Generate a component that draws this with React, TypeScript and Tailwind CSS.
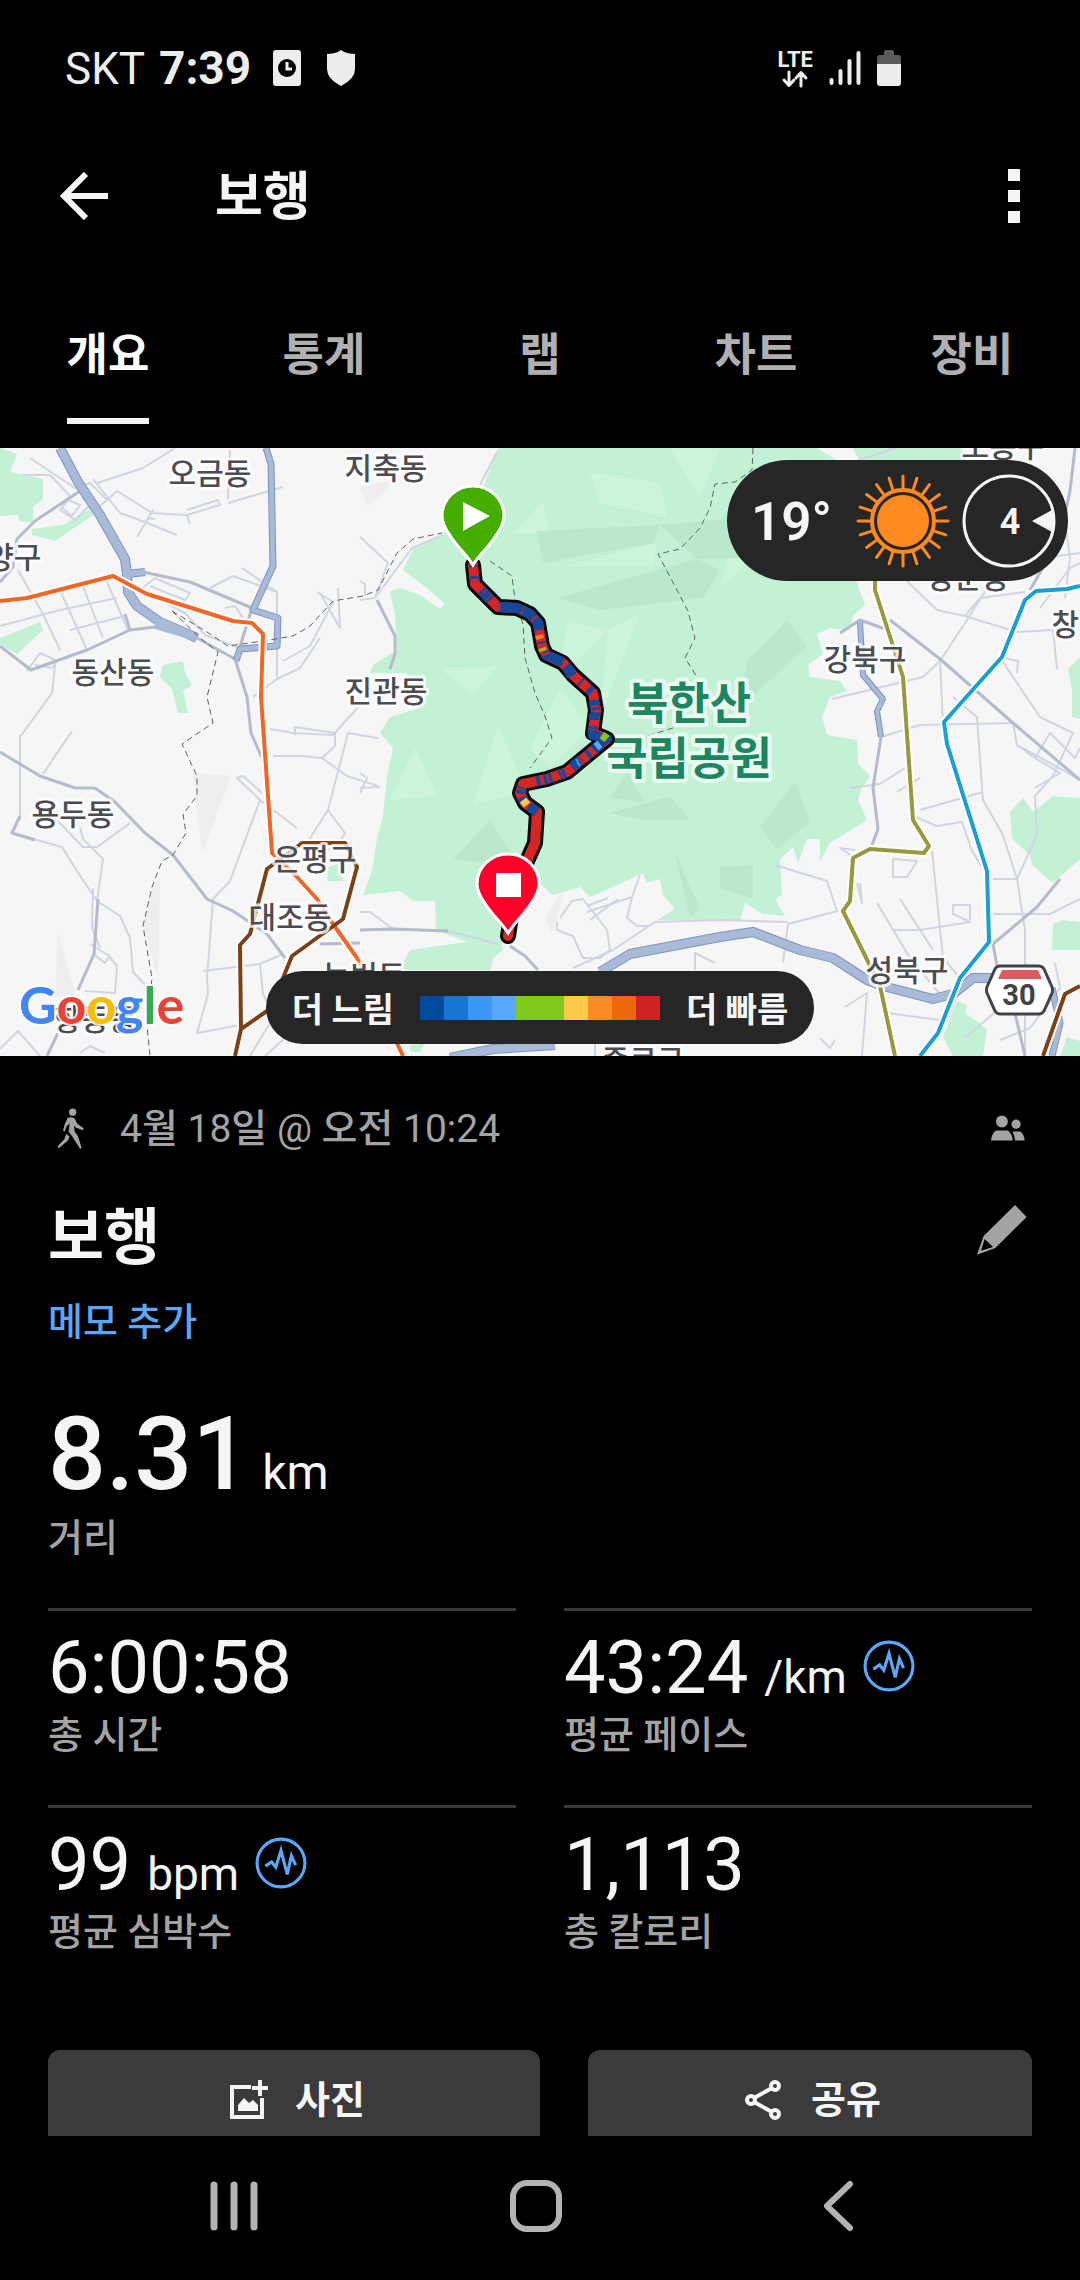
import type { ReactNode } from "react"

interface Stat {
  value: string
  unit?: string
  label: string
  hasInsight?: boolean
}

interface MapLabel {
  text: string
  x: number
  y: number
}

const tabs = ["개요", "통계", "랩", "차트", "장비"]

const stats: Stat[] = [
  { value: "6:00:58", label: "총 시간" },
  { value: "43:24", unit: "/km", label: "평균 페이스", hasInsight: true },
  { value: "99", unit: "bpm", label: "평균 심박수", hasInsight: true },
  { value: "1,113", label: "총 칼로리" },
]

// Slow to fast
const paceColors = [
  "#004b9f",
  "#1976d2",
  "#3d97f4",
  "#57a9ff",
  "#80c91f",
  "#80c91f",
  "#fccb4b",
  "#fd8b25",
  "#ec680d",
  "#cf2323",
]

const mapLabels: MapLabel[] = [
  { text: "오금동", x: 210, y: 36 },
  { text: "지축동", x: 386, y: 31 },
  { text: "덕양구", x: 0, y: 120 },
  { text: "동산동", x: 113, y: 235 },
  { text: "진관동", x: 386, y: 254 },
  { text: "용두동", x: 73, y: 377 },
  { text: "은평구", x: 315, y: 422 },
  { text: "대조동", x: 290, y: 480 },
  { text: "녹번동", x: 364, y: 539 },
  { text: "향동동", x: 95, y: 582 },
  { text: "종로구", x: 643, y: 623 },
  { text: "도봉구", x: 1003, y: 9 },
  { text: "쌍문동", x: 968, y: 140 },
  { text: "강북구", x: 865, y: 222 },
  { text: "성북구", x: 907, y: 533 },
  { text: "창동", x: 1079, y: 187 },
]

const parks = [
  "498,0 485,35 442,87 413,101 403,122 427,140 445,156 440,161 420,147 400,140 390,144 395,166 397,202 373,217 370,225 405,225 427,245 417,261 390,269 380,285 393,300 387,328 383,368 377,391 372,423 363,447 400,443 413,453 435,453 436,482 467,494 410,502 400,522 491,522 493,510 503,502 500,480 527,423 553,447 580,439 590,449 613,439 643,425 647,435 660,431 663,447 675,461 657,472 740,472 745,455 763,466 785,468 775,451 782,447 780,411 793,399 798,415 807,391 820,391 820,413 830,395 867,372 858,352 862,340 870,328 858,316 857,292 827,287 822,269 830,249 847,243 840,233 810,229 808,217 823,206 817,186 830,180 850,182 853,168 865,156 858,138 843,16 817,0",
  "0,0 17,6 10,24 43,31 43,51 33,59 33,75 20,73 18,67 0,68",
  "32,81 63,77 90,61 93,67 55,93 32,87",
  "0,190 40,174 43,182 17,206 0,196",
  "160,229 163,217 183,213 185,225 192,237 183,243 188,265 178,265 172,241",
  "328,419 340,415 343,433 327,433",
  "853,0 960,0 967,12 860,14",
  "1010,364 1023,350 1033,364 1053,348 1080,350 1080,411 1053,435 1032,417 1030,407 1012,391",
  "1068,221 1080,209 1080,271 1072,269 1072,241",
  "1053,476 1063,472 1080,474 1080,502 1052,502",
  "943,589 957,553 967,557 965,565 987,581 983,608 953,608",
  "1067,589 1080,593 1080,608 1060,608",
  "410,597 424,596 420,604 410,604",
]

const lightFacets = [
  "590,24 660,35 667,69 600,55",
  "513,85 543,53 550,85",
  "567,118 657,95 653,118",
  "560,229 567,174 608,182",
  "608,182 640,165 625,205 600,270",
  "440,221 497,219 473,247",
  "390,352 415,300 438,348",
  "473,356 498,277 527,344",
  "670,0 720,0 700,51",
  "530,300 560,240 590,280 550,320",
  "740,70 775,90 720,140",
]

const darkFacets = [
  "537,83 660,77 653,95 543,115",
  "660,77 720,72 800,10 820,80 760,110 697,111",
  "557,150 697,111 720,122 703,150 600,162",
  "610,350 627,324 645,354",
  "453,411 490,372 520,419",
  "640,372 690,372 670,348 610,365",
  "760,379 795,334 810,374 777,401",
  "747,213 787,172 807,198 740,260",
  "720,419 753,417 753,451 720,440",
  "675,405 700,460 690,470",
]

const minorRoads = [
  "20,372 20,289 52,245 55,217",
  "43,326 72,283",
  "12,385 62,399 77,423 97,453 120,468 130,490 133,524 152,544",
  "80,379 83,391 103,411 97,453",
  "130,375 97,399 83,399 57,372",
  "93,31 120,65 137,71 177,87",
  "107,52 117,43 152,65 187,67 220,57 218,52 187,62",
  "137,89 153,62 148,70 155,71",
  "187,67 190,76",
  "228,55 283,39",
  "230,2 228,51",
  "97,35 143,20 175,0",
  "30,10 75,40 90,35 107,52 97,60 82,50",
  "23,27 50,27 70,48 60,62 75,72 92,55",
  "62,60 68,52 80,57 72,68 62,60",
  "60,142 87,202",
  "83,138 103,190",
  "107,134 128,182",
  "0,178 60,162 117,150",
  "70,182 125,168",
  "18,122 43,166 60,202",
  "27,223 40,205 57,213 52,220 35,217",
  "140,142 155,130 190,145 185,152 150,138",
  "160,152 185,165 205,187 240,200",
  "225,160 235,158 243,170 230,177",
  "210,140 233,128 277,144 277,231 253,249",
  "242,120 277,144",
  "297,380 260,352 230,433 213,451 207,530 208,546 197,585 240,577",
  "260,352 237,330 243,328 262,345",
  "270,281 293,285 333,287 360,257",
  "273,308 300,308 322,310 347,328 378,338",
  "322,310 335,298 335,285 295,279 295,287",
  "348,285 378,290",
  "348,285 328,362 307,395",
  "328,362 345,385 335,400 315,402",
  "283,213 310,198 333,154 317,144",
  "320,145 340,180 338,140",
  "277,231 300,220 320,190",
  "203,523 260,516 283,506",
  "260,516 263,546 277,573",
  "0,601 18,583 40,608",
  "90,496 108,507 117,518 115,545 85,543",
  "95,507 105,515 110,507",
  "93,440 92,480 100,500",
  "80,605 90,598 105,605",
  "250,608 270,575 285,590 265,608",
  "360,89 388,115 375,150 360,152",
  "497,4 480,37",
  "375,150 412,100 442,87",
  "360,133 365,136 365,148",
  "360,340 380,339",
  "360,325 367,330 360,345",
  "360,464 370,464 393,481",
  "448,483 498,496",
  "557,474 557,482 573,488 583,510 600,510 610,502 607,482 583,451 572,453 560,470",
  "590,472 618,451",
  "587,458 608,450",
  "640,427 632,449 587,464",
  "632,449 627,470 637,478 650,478",
  "573,520 613,502 655,474 720,472 788,474",
  "695,522 695,505 715,515",
  "595,608 595,590 610,590",
  "907,133 937,162 965,168 980,150 1025,144",
  "832,251 923,229 940,213 967,172 1000,120",
  "940,213 943,276",
  "881,289 920,277 1013,275",
  "953,249 977,269 983,352 1003,387 1017,431 1025,482 1025,608",
  "920,362 983,344",
  "850,340 880,336 905,320",
  "897,344 920,330",
  "913,368 937,378 962,374 972,403 987,427",
  "893,411 893,429 907,429 917,413 893,411",
  "932,403 943,510 960,530",
  "993,431 1017,431 1037,387 1035,348 1053,328 1073,285 1040,269 1013,229 1000,209 1018,213 1017,225",
  "965,168 1017,184 1053,182 1057,221",
  "775,417 827,433 837,463 788,476 783,514",
  "993,466 1050,466 1080,451",
  "877,455 910,510 940,546",
  "900,451 933,502",
  "892,482 920,482 970,474 953,466 953,457 970,457 970,472",
  "887,565 947,573 960,540",
  "1013,275 1017,297 1050,315 1080,332",
  "1017,297 1035,310 1060,325 1035,340",
  "1035,310 1050,285 1075,310 1080,300",
  "1040,160 1070,120 1080,115",
  "1030,60 1045,110 1080,105",
  "1065,75 1070,110 1065,150",
  "853,14 895,0",
  "855,402 840,400 855,410",
  "860,435 862,455 857,435",
  "820,590 830,600 835,592",
  "845,559 867,545 862,608",
  "1000,592 1030,580 1060,540 1055,515",
  "965,590 1000,560 985,530",
]

const majorRoads = [
  "0,304 40,328 75,340 95,340 115,354 145,385 173,407 207,451 233,463 267,486 285,510",
  "143,124 190,134 252,160",
  "0,198 31,222 87,202 130,182 155,179",
  "125,166 130,182",
  "197,190 235,211 247,249 251,285 262,310",
  "252,160 238,205",
  "0,134 13,119 17,91 35,73 83,41",
  "20,368 12,385 35,392",
  "78,542 94,506 98,451",
  "58,585 47,608",
  "320,496 360,495",
  "377,152 395,188 395,206 390,221",
  "360,482 393,481 448,483",
  "510,498 525,508 538,522",
  "881,289 873,340 878,381 872,397",
  "890,172 940,211 1013,275 1080,332",
  "1075,0 1070,43 1060,90 1030,142",
  "1060,431 1037,459 993,496 997,518",
  "1015,565 1025,608",
  "888,182 860,172 840,185",
]

const highways = [
  { points: "60,0 78,34 100,67 117,97 125,111 127,126 128,144 137,158 160,174 197,190", width: 9 },
  { points: "127,126 145,124", width: 7 },
  { points: "266,0 271,16 273,118 253,162 278,170 277,198 240,201 236,213", width: 6 },
  { points: "600,524 630,506 720,489 753,484 800,502 833,510 867,532 883,538 933,551 953,546 973,530 990,530 1030,549 1055,546", width: 9 },
  { points: "450,610 493,601 555,597", width: 9 },
  { points: "860,174 863,227 883,251 877,263 881,289", width: 5 },
  { points: "1052,540 1060,575 1052,608", width: 6 },
]

const boundaries = [
  "172,163 207,184 228,198 263,193 293,188 310,178 333,153 363,148 378,142 397,105 413,91 442,85",
  "172,163 200,190 218,204 207,249 213,275 182,296 197,328 197,348 183,366 186,385 173,407 162,413 152,439 143,478 152,530 147,577 150,608",
  "490,113 512,128 515,152 523,176 525,210 535,245 545,268 552,290 530,320",
  "753,0 752,22 735,34 715,36 710,60 700,80 680,101 658,106 688,163 695,190 685,210 697,229",
  "673,280 647,288",
]

const metroLines = [
  { color: "#f26522", width: 4, points: "0,153 27,150 113,128 147,146 233,173 252,175 263,186 261,249 272,405 297,429 317,451 333,476 357,510 403,608" },
  { color: "#7d4016", width: 4, points: "235,608 241,581 240,497 250,486 267,421 302,395 345,395 357,419 343,471 292,508 283,530 267,563 241,581" },
  { color: "#97993d", width: 4, points: "875,133 875,142 903,229 913,372 929,398 924,405 870,401 853,410 850,453 843,463 880,538 895,608" },
  { color: "#189fd3", width: 4, points: "1080,138 1067,141 1036,143 1025,152 1002,209 944,274 947,296 987,423 989,494 960,530 938,585 920,608" },
  { color: "#7d4016", width: 4, points: "1080,538 1065,546 1043,608" },
]

// The track is mixed pace up to the last bend, then steadily fast
const mixedRoute = "473,117 475,136 485,146 498,159 517,160 530,166 538,175 542,198 546,207 563,215 573,227 593,245 596,262 593,285 607,291 567,324 547,331 523,336 520,345 525,355 537,364"
const steadyRoute = "537,364 535,395 527,413 514,450 508,488"

// Slow stretches drawn over the red base route
const slowSegments = [
  "484,145 490,152",
  "498,159 517,160 530,166 538,175 539,182",
  "544,206 563,214",
  "568,220 572,228",
  "594,252 595,262",
  "594,266 594,272",
  "593,278 593,287 600,289",
  "605,291 594,302",
  "582,311 573,318",
  "565,325 560,328",
  "552,330 544,332",
  "522,342 521,346",
  "529,358 537,364",
]

const fastSegments = [
  { color: "#f58220", points: "539,187 540,191" },
  { color: "#80c91f", points: "542,200 543,203" },
  { color: "#80c91f", points: "602,287 607,291" },
  { color: "#57a9ff", points: "600,296 596,299" },
  { color: "#fccb4b", points: "523,352 527,357" },
  { color: "#3d97f4", points: "579,314 577,315" },
]

function StatusBar() {
  return (
    <div className="flex h-[136px] shrink-0 items-center justify-between pl-[65px] pr-[179px] text-[#ededed]">
      <div className="flex items-center">
        <span className="pt-[2px] text-[44px] leading-[56px] font-normal">SKT</span>
        <span className="ml-[14px] text-[46px] leading-[56px] font-bold">7:39</span>
        <svg className="ml-[22px] h-9 w-7" viewBox="0 0 28 36">
          <rect width="28" height="36" rx="3" fill="#ededed" />
          <circle cx="14" cy="18" r="9" fill="#000" />
          <path d="M14 12v7h5" fill="none" stroke="#ededed" strokeWidth="3" />
        </svg>
        <svg className="ml-[26px] h-9 w-7" viewBox="0 0 28 36">
          <path d="M14 0l3 2q5 2 11 2v15q0 10-14 17Q0 29 0 19V4q6 0 11-2z" fill="#ededed" />
        </svg>
      </div>
      <div className="flex items-center">
        <div className="flex flex-col items-center pt-[2px]">
          <span className="text-[22px] leading-[20px] font-bold">LTE</span>
          <svg className="h-[18px] w-7" viewBox="0 0 28 18" fill="none" stroke="#ededed" strokeWidth="3" strokeLinecap="round" strokeLinejoin="round">
            <path d="M8 2v13M3 10l5 5.500 5-5.500M20 16V3M15 8l5-5.500L25 8" />
          </svg>
        </div>
        <svg className="ml-4 h-9 w-8" viewBox="0 0 32 36" stroke="#ededed" strokeWidth="4" strokeLinecap="round">
          <path d="M2.500 30v3M11.500 21v12M20.500 11v22M29.500 3v30" />
        </svg>
        <svg className="ml-4 h-9 w-6" viewBox="0 0 24 36">
          <path d="M7 2q0-2 2-2h6q2 0 2 2v3h4q3 0 3 3v6H0V8q0-3 3-3h4z" fill="#5a5a5a" />
          <path d="M0 14h24v19q0 3-3 3H3q-3 0-3-3z" fill="#ededed" />
        </svg>
      </div>
    </div>
  )
}

function Header() {
  return (
    <header className="flex h-[120px] shrink-0 items-center pl-[60px] pr-[60px]">
      <button aria-label="뒤로">
        <svg className="h-12 w-12" viewBox="0 0 48 48" fill="none" stroke="#f5f5f5" strokeWidth="6">
          <path d="M48 24H5M26 2L4 24l22 22" />
        </svg>
      </button>
      <h1 className="ml-[107px] pt-1 text-[52px] leading-[60px] font-bold">보행</h1>
      <button className="ml-auto flex flex-col gap-[9px]" aria-label="더보기">
        <span className="h-3 w-3 bg-[#f5f5f5]" />
        <span className="h-3 w-3 bg-[#f5f5f5]" />
        <span className="h-3 w-3 bg-[#f5f5f5]" />
      </button>
    </header>
  )
}

function Tabs() {
  return (
    <nav className="grid h-48 shrink-0 grid-cols-5">
      {tabs.map((tab, index) => (
        <button key={tab} className="flex flex-col items-center justify-end pb-6">
          <span className={index === 0 ? "text-[45px] leading-[56px] font-bold text-white" : "text-[45px] leading-[56px] font-bold text-[#b0b0b0]"}>
            {tab}
          </span>
          <span className={index === 0 ? "mt-[34px] h-[6px] w-[82px] bg-[#f5f5f5]" : "mt-[34px] h-[6px] w-[82px]"} />
        </button>
      ))}
    </nav>
  )
}

function Pin({ x, y, color, children }: { x: number; y: number; color: string; children: ReactNode }) {
  return (
    <g transform={`translate(${x} ${y})`}>
      <path d="M0 78C-6 68-14 62-22 50-28 42-31 36-31 29A31 30 0 0 1 31 29C31 36 28 42 22 50 14 62 6 68 0 78z" fill={color} stroke="#fff" strokeWidth="3" />
      {children}
    </g>
  )
}

function RouteMap() {
  return (
    <svg className="h-full w-full" viewBox="0 0 1080 608" preserveAspectRatio="xMidYMid slice">
      <rect width="1080" height="608" fill="#f6f6f7" />
      <g fill="#eeeeef">
        <polygon points="193,325 231,328 202,405" />
        <polygon points="152,439 160,430 158,530 143,478" />
        <polygon points="58,485 75,545 55,550" />
        <polygon points="360,40 400,30 368,58" />
        <polygon points="545,470 565,440 552,487" />
      </g>
      {parks.map((points) => (
        <polygon key={points} points={points} fill="#c2f1d5" />
      ))}
      {lightFacets.map((points) => (
        <polygon key={points} points={points} fill="#cdf5db" />
      ))}
      {darkFacets.map((points) => (
        <polygon key={points} points={points} fill="#b9e8cc" />
      ))}

      <g fill="none" strokeLinejoin="round">
        {minorRoads.map((points) => (
          <polyline key={points} points={points} stroke="#d0d6e1" strokeWidth="2" />
        ))}
        {majorRoads.map((points) => (
          <polyline key={points} points={points} stroke="#b4bbca" strokeWidth="3" />
        ))}
        {highways.map((road) => (
          <polyline key={road.points} points={road.points} stroke="#7d93c0" strokeWidth={road.width + 1} />
        ))}
        {highways.map((road) => (
          <polyline key={road.points} points={road.points} stroke="#a9bad9" strokeWidth={road.width - 1} />
        ))}
        <polygon points="154,170 165,172 197,186 195,192 175,187 155,181" fill="#a9bad9" />
        {boundaries.map((points) => (
          <polyline key={points} points={points} stroke="#5d6066" strokeWidth="1" strokeDasharray="6 4" />
        ))}
        {metroLines.map((line) => (
          <polyline key={line.points} points={line.points} stroke="#fff" strokeWidth="8" />
        ))}
        {metroLines.map((line) => (
          <polyline key={line.points} points={line.points} stroke={line.color} strokeWidth={line.width} />
        ))}
      </g>

      <g textAnchor="middle" fill="#4b4d52" stroke="#fff" strokeWidth="6" strokeLinejoin="round" strokeOpacity="0.8" paintOrder="stroke" className="text-[30px] font-medium">
        {mapLabels.map((label) => (
          <text key={label.text} x={label.x} y={label.y}>
            {label.text}
          </text>
        ))}
      </g>
      <g textAnchor="middle" fill="#1c8660" stroke="#e9faf0" strokeWidth="8" strokeLinejoin="round" paintOrder="stroke" className="text-[45px] font-bold">
        <text x="689" y="272">북한산</text>
        <text x="689" y="327">국립공원</text>
      </g>

      {/* Route 30 shield */}
      <path d="M1000 518h39q3 0 5 3l8 18q1 3 0 6l-8 18q-2 3-5 3h-39q-3 0-5-3l-8-18q-1-3 0-6l8-18q2-3 5-3z" fill="#fff" stroke="#414345" strokeWidth="3" />
      <path d="M1002 522h36l4 9h-44z" fill="#dc5a60" />
      <text x="1019" y="557" textAnchor="middle" fill="#414345" className="text-[29px] font-bold">30</text>

      <g fill="none" strokeLinejoin="round">
        <polyline points={mixedRoute} stroke="#0a0a0a" strokeWidth="16" strokeLinecap="round" />
        <polyline points={steadyRoute} stroke="#0a0a0a" strokeWidth="16" strokeLinecap="round" />
        <polyline points={mixedRoute} stroke="#d62626" strokeWidth="10" strokeLinecap="round" />
        <polyline points={steadyRoute} stroke="#d62626" strokeWidth="10" strokeLinecap="round" />
        <polyline points={mixedRoute} stroke="#15479a" strokeWidth="10" strokeDasharray="2 9 5 12 3 6 4 17" />
        {slowSegments.map((points) => (
          <polyline key={points} points={points} stroke="#15479a" strokeWidth="10" />
        ))}
        <polyline points={mixedRoute} stroke="#d62626" strokeWidth="8" strokeDasharray="1 13 2 22" />
        {fastSegments.map((segment) => (
          <polyline key={segment.points} points={segment.points} stroke={segment.color} strokeWidth="8" />
        ))}
      </g>

      <Pin x={473} y={39} color="#44ad00">
        <path d="M-10 15L17 29-10 44z" fill="#fff" />
      </Pin>
      <Pin x={508} y={407} color="#ff0029">
        <rect x="-12" y="18" width="25" height="24" fill="#fff" />
      </Pin>
    </svg>
  )
}

function SunIcon() {
  const rays = Array.from({ length: 20 }, (_, i) => i * 18)

  return (
    <svg className="h-[94px] w-[94px]" viewBox="-47 -47 94 94">
      <circle r="31" fill="none" stroke="#ff8a1f" strokeWidth="4" />
      <circle r="26" fill="#ff8a1f" />
      {rays.map((angle) => (
        <path key={angle} d="M0-33V-45" stroke="#ff8a1f" strokeWidth="3" strokeLinecap="round" transform={`rotate(${angle})`} />
      ))}
    </svg>
  )
}

function Weather() {
  return (
    <div className="absolute top-3 right-3 flex h-[121px] items-center rounded-full bg-[#262626] pr-3 pl-6 text-[#f5f5f5]">
      <span className="w-[105px] pt-[2px] text-[53px] leading-[60px] font-semibold">19°</span>
      <SunIcon />
      <svg className="ml-3 h-[94px] w-[94px]" viewBox="0 0 94 94">
        <circle cx="47" cy="47" r="45" fill="none" stroke="#f5f5f5" strokeWidth="3" />
        <path d="M70 47l20-11q4 11 0 22z" fill="#f5f5f5" />
        <text x="48" y="60" textAnchor="middle" fill="#f5f5f5" className="text-[36px] font-semibold">4</text>
      </svg>
    </div>
  )
}

function PaceLegend() {
  return (
    <div className="absolute inset-x-0 bottom-3 flex justify-center">
      <div className="flex h-[73px] items-center gap-[26px] rounded-full bg-[#262626] px-[26px] text-[34px] leading-[44px] font-bold text-[#f5f5f5]">
        <span className="pt-1">더 느림</span>
        <div className="flex h-6">
          {paceColors.map((color, index) => (
            <span key={index} className="w-6" style={{ backgroundColor: color }} />
          ))}
        </div>
        <span className="pt-1">더 빠름</span>
      </div>
    </div>
  )
}

function GoogleMark() {
  return (
    <div className="absolute bottom-4 left-[19px] font-['Lato',sans-serif] text-[52px] leading-[72px] font-bold [paint-order:stroke] [-webkit-text-stroke:4px_#ffffffcc]">
      <span className="text-[#4285f4]">G</span>
      <span className="text-[#ea4335]">o</span>
      <span className="text-[#fbbc05]">o</span>
      <span className="text-[#4285f4]">g</span>
      <span className="text-[#34a853]">l</span>
      <span className="text-[#ea4335]">e</span>
    </div>
  )
}

function InsightIcon() {
  return (
    <svg className="h-[52px] w-[52px]" viewBox="0 0 50 50" fill="none" stroke="#5ba7f7">
      <circle cx="25" cy="25" r="23" strokeWidth="3" />
      <path d="M10 28l6-4 4 5 5-16 6 23 4-18 4 9" strokeWidth="3" />
    </svg>
  )
}

function StatCell({ stat }: { stat: Stat }) {
  return (
    <div className="border-t-3 border-[#3b3b3b] pt-5 pb-[46px]">
      <div className="flex items-center">
        <div className="flex items-baseline gap-4">
          <span className="text-[74px] leading-[74px]">{stat.value}</span>
          {stat.unit && <span className="text-[46px] leading-[56px]">{stat.unit}</span>}
        </div>
        {stat.hasInsight && (
          <button className="ml-4 pb-1" aria-label={stat.label}>
            <InsightIcon />
          </button>
        )}
      </div>
      <p className="mt-[6px] text-[38px] leading-[48px] font-medium text-[#a3a3a3]">{stat.label}</p>
    </div>
  )
}

function Summary() {
  return (
    <section className="px-12 pt-11">
      <div className="flex h-14 items-center text-[#a3a3a3]">
        <svg className="ml-[10px] h-[41px] w-[26px]" viewBox="57 53 78 122" fill="#a3a3a3">
          <circle cx="101" cy="65" r="11" />
          <path d="M86 82q12-4 21 2l8 16 19 13-2 6-21-7-6-7 2 18 10 14 11 36-5 2-23-37-11-14 3-25-9 8-6 16-5-2 5-19z" />
          <path d="M82 130l10 9-6 12-27 22-4-4 21-23z" />
        </svg>
        <p className="ml-9 pt-[2px] text-[39px] leading-[48px]">
          4<span className="font-medium">월</span> 18<span className="font-medium">일</span> @ <span className="font-medium">오전</span> 10:24
        </p>
        <svg className="ml-auto mr-[7px] h-[26px] w-[34px]" viewBox="93 77 103 77" fill="#a3a3a3">
          <circle cx="126" cy="96" r="18" />
          <circle cx="169" cy="104" r="14" />
          <path d="M93 153q2-20 15-30h36q13 10 15 30zM158 126h24q11 8 13 27h-29q-2-16-8-27z" />
        </svg>
      </div>

      <div className="mt-[46px] flex h-[72px] items-center justify-between">
        <h2 className="text-[61px] leading-[72px] font-bold">보행</h2>
        <button className="mr-[5px] mb-4" aria-label="이름 편집">
          <svg className="h-[50px] w-[50px]" viewBox="52 345 150 150">
            <path fillRule="evenodd" d="M166 345l35 36-94 93-55 20 20-56zM75 447l-11 35 36-11z" fill="#a3a3a3" />
          </svg>
        </button>
      </div>

      <button className="mt-6 block text-[38px] leading-[48px] font-medium text-[#5ba7f7]">메모 추가</button>

      <div className="mt-14 flex items-baseline gap-3">
        <span className="text-[102px] leading-[104px] font-medium">8.31</span>
        <span className="text-[48px] leading-[56px]">km</span>
      </div>
      <p className="mt-2 text-[38px] leading-[48px] font-medium text-[#a3a3a3]">거리</p>

      <div className="mt-[46px] grid grid-cols-2 gap-x-12">
        {stats.map((stat) => (
          <StatCell key={stat.label} stat={stat} />
        ))}
      </div>

      <div className="mt-12 grid grid-cols-[41fr_37fr] gap-x-12 text-[38px] leading-[44px] font-bold">
        <button className="flex items-center justify-center gap-6 rounded-xl bg-[#3b3b3b] pt-7 pb-12 pl-1">
          <svg className="h-11 w-11" viewBox="0 0 44 44">
            <path d="M24 9H5v30h30V20M33 2v16M25 10h16" fill="none" stroke="#f5f5f5" strokeWidth="4" />
            <path d="M11 33v-6l6-7 5 5 4-3 5 5v6z" fill="#f5f5f5" />
          </svg>
          사진
        </button>
        <button className="flex items-center justify-center gap-7 rounded-xl bg-[#3b3b3b] pt-7 pb-12 pl-1">
          <svg className="h-11 w-10" viewBox="0 0 40 44" fill="none" stroke="#f5f5f5" strokeWidth="4">
            <circle cx="8" cy="22" r="4" />
            <circle cx="32" cy="8" r="4" />
            <circle cx="32" cy="36" r="4" />
            <path d="M11 20L29 10M11 24l18 10" />
          </svg>
          공유
        </button>
      </div>
    </section>
  )
}

function SystemNav() {
  return (
    <nav className="flex h-36 shrink-0 items-center justify-center gap-[250px] pb-1 pr-2">
      <button aria-label="최근 앱">
        <svg className="h-[52px] w-[52px]" viewBox="0 0 52 52" stroke="#b3b3b3" strokeWidth="7" strokeLinecap="round">
          <path d="M6 5v42M26 5v42M46 5v42" />
        </svg>
      </button>
      <button aria-label="홈">
        <svg className="h-[52px] w-[52px]" viewBox="0 0 52 52">
          <rect x="3" y="3" width="46" height="46" rx="14" fill="none" stroke="#b3b3b3" strokeWidth="6" />
        </svg>
      </button>
      <button aria-label="뒤로 가기">
        <svg className="h-[52px] w-[52px]" viewBox="0 0 52 52" fill="none" stroke="#b3b3b3" strokeWidth="6" strokeLinecap="round" strokeLinejoin="round">
          <path d="M38 4L15 26l23 22" />
        </svg>
      </button>
    </nav>
  )
}

export default function App() {
  return (
    <div className="flex h-screen flex-col bg-black font-['Roboto','Noto_Sans_CJK_KR',sans-serif] text-[#f5f5f5]">
      <StatusBar />
      <Header />
      <Tabs />
      <main className="flex-1 overflow-hidden">
        <div className="relative aspect-[1080/608] w-full overflow-hidden">
          <RouteMap />
          <Weather />
          <GoogleMark />
          <PaceLegend />
        </div>
        <Summary />
      </main>
      <SystemNav />
    </div>
  )
}
